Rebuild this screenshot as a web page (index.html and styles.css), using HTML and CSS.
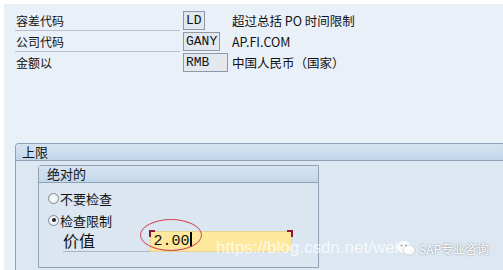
FILE: index.html
```html
<!DOCTYPE html>
<html lang="zh">

<head>
    <meta charset="UTF-8">
    <title>容差代码</title>
    <link rel="stylesheet" href="styles.css">
</head>

<body>
    <div class="screen">
        <!-- 头部字段 -->
        <div class="fields">
            <div class="row">
                <span class="label">容差代码</span>
                <span class="cell"><span class="box">LD</span></span>
                <span class="desc">超过总括 PO 时间限制</span>
            </div>
            <div class="row">
                <span class="label">公司代码</span>
                <span class="cell"><span class="box">GANY</span></span>
                <span class="desc">AP.FI.COM</span>
            </div>
            <div class="row">
                <span class="label last">金额以</span>
                <span class="cell"><span class="box wide">RMB</span></span>
                <span class="desc">中国人民币（国家）</span>
            </div>
        </div>

        <!-- 上限 -->
        <div class="group">
            <div class="group-head">上限</div>
            <div class="group-body">
                <div class="sub">
                    <div class="sub-head">绝对的</div>
                    <div class="sub-body">
                        <div class="radio-row"><i class="radio"></i>不要检查</div>
                        <div class="radio-row"><i class="radio on"></i>检查限制</div>
                        <div class="value-row">
                            <span class="value-label">价值</span>
                            <span class="value-input">2.00<b class="caret"></b></span>
                        </div>
                    </div>
                </div>
            </div>
        </div>

        <div class="mark">https://blog.csdn.net/wei</div>
        <div class="brand">
            <svg width="20" height="17" viewBox="0 0 20 17">
                <ellipse cx="8" cy="7" rx="7" ry="6" fill="#fff" opacity="0.85"/>
                <ellipse cx="13" cy="10" rx="6" ry="5" fill="#fff" opacity="0.85" stroke="#bbb" stroke-width="0.6"/>
                <circle cx="5.5" cy="5.5" r="0.9" fill="#999"/>
                <circle cx="10" cy="5.5" r="0.9" fill="#999"/>
            </svg>
            <span>SAP专业咨询</span>
        </div>
    </div>
</body>

</html>
```

FILE: styles.css
```css
body {
    margin: 0;
    background-color: #fff;
    font-family: "Noto Sans CJK SC", "Liberation Sans", sans-serif;
    font-size: 12px;
    color: #111;
}

.screen {
    margin: 4px 0 0 4px;
    height: 266px;
    padding-top: 6px;
    box-sizing: border-box;
    background-color: #e9f0f8;
    position: relative;
    overflow: hidden;
}

.fields {
    padding-left: 11px;
}

.row {
    display: flex;
    align-items: center;
    height: 21px;
}

.row .label {
    width: 165px;
    height: 21px;
    line-height: 21px;
    padding-left: 1px;
    box-sizing: border-box;
    border-bottom: 1px solid #b7c0ca;
}

.row .label.last {
    border-bottom-color: transparent;
}

.cell {
    width: 45px;
    margin-left: 3px;
    display: flex;
}

.box {
    height: 19px;
    min-width: 21px;
    box-sizing: border-box;
    padding: 0 2px;
    border: 1px solid #8d99a7;
    background-color: #e3e8ee;
    font-family: "Liberation Mono", monospace;
    font-size: 13px;
    line-height: 17px;
}

.box.wide {
    width: 45px;
}

.desc {
    margin-left: 4px;
    font-size: 12.5px;
}

.group {
    margin: 70px 0 0 11px;
    border-left: 1px solid #8fa2b6;
    border-top: 1px solid #8fa2b6;
    border-radius: 4px 0 0 0;
}

.group-head {
    height: 16px;
    line-height: 16px;
    padding-left: 6px;
    background: linear-gradient(#d6e4f1, #c2d6ea);
    border-bottom: 1px solid #8fa2b6;
    border-radius: 3px 0 0 0;
    font-size: 13px;
}

.group-body {
    background-color: #dce7f2;
    padding: 4px 0 0 22px;
    height: 120px;
}

.sub {
    width: 279px;
    border: 1px solid #8fa2b6;
    border-radius: 3px 0 0 0;
    background-color: #dbe6f1;
}

.sub-head {
    height: 16px;
    line-height: 16px;
    padding-left: 8px;
    background: linear-gradient(#d6e4f1, #c3d6ea);
    border-bottom: 1px solid #8fa2b6;
    font-size: 13px;
}

.sub-body {
    padding: 4px 0 15px 9px;
}

.radio-row {
    display: flex;
    align-items: center;
    height: 22px;
    font-size: 13px;
}

.radio {
    width: 11px;
    height: 11px;
    box-sizing: border-box;
    border: 1px solid #7f8b98;
    border-radius: 50%;
    background: radial-gradient(#fff, #e2e6ea);
    margin-right: 1px;
    display: flex;
    justify-content: center;
    align-items: center;
}

.radio.on::after {
    content: "";
    width: 4px;
    height: 4px;
    border-radius: 50%;
    background-color: #222;
}

.value-row {
    display: flex;
    align-items: flex-end;
    margin-left: 15px;
    width: 229px;
    height: 20px;
    border-bottom: 1px solid #aab5c1;
    position: relative;
}

.value-label {
    width: 87px;
    font-size: 16px;
    line-height: 20px;
    padding-bottom: 1px;
}

.value-input {
    width: 143px;
    height: 21px;
    margin-bottom: -1px;
    box-sizing: border-box;
    padding-left: 3px;
    background-color: #fee89c;
    border: 1px solid #e6d490;
    font-family: "Liberation Mono", monospace;
    font-size: 15px;
    line-height: 19px;
    position: relative;
}

/* 红色角标 */
.value-input::before,
.value-input::after {
    content: "";
    position: absolute;
    top: -2px;
    width: 4px;
    height: 5px;
    border-top: 2px solid #8a1830;
}

.value-input::before {
    left: -2px;
    border-left: 2px solid #8a1830;
}

.value-input::after {
    right: -2px;
    border-right: 2px solid #8a1830;
}

.caret {
    display: inline-block;
    width: 2px;
    height: 15px;
    background-color: #000;
    vertical-align: -2px;
}

/* 红色圈 */
.value-row::after {
    content: "";
    position: absolute;
    left: 77px;
    top: -12px;
    width: 60px;
    height: 30px;
    border: 1px solid #cf4a5c;
    border-radius: 50%;
}

.mark {
    position: absolute;
    left: 212px;
    top: 234px;
    font-family: "Liberation Sans", sans-serif;
    font-size: 17px;
    color: rgba(255, 255, 255, 0.75);
    white-space: nowrap;
}

.brand {
    position: absolute;
    left: 392px;
    top: 236px;
    display: flex;
    align-items: center;
    gap: 3px;
    font-size: 12px;
    color: #fff;
    text-shadow: 0 0 2px #777;
}
```
